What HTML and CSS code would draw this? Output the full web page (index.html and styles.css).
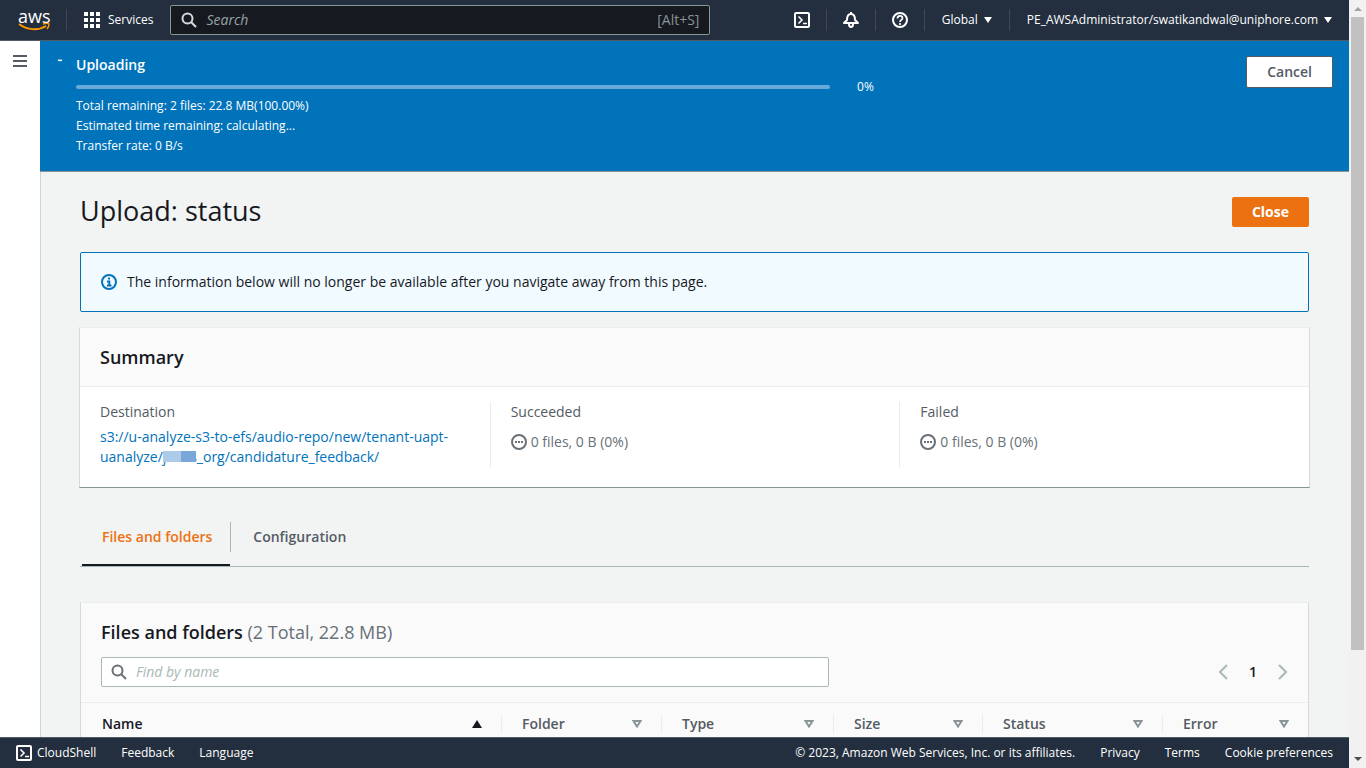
FILE: index.html
```html
<!DOCTYPE html>
<html lang="en">
<head>
  <meta charset="UTF-8">
  <meta name="viewport" content="width=device-width, initial-scale=1.0">
  <title>Upload: status</title>
  <link rel="stylesheet" href="styles.css">
</head>
<body>
  <div class="app">
    <header class="topbar">
      <a href="#" class="logo" aria-label="AWS home">
        <span class="logo-text">aws</span>
        <svg class="logo-smile" width="32" height="8" viewBox="0 0 32 8" fill="none" stroke="#ff9900">
          <path d="M1 1C9 7 20 8 28 3" stroke-width="2"/>
          <path d="M25 1C28 0 30 0 31 1C31 3 30 5 29 6" stroke-width="1.4"/>
        </svg>
      </a>
      <button class="services">
        <svg width="16" height="16" viewBox="0 0 16 16" fill="#fff">
          <path d="M0 0h4v4H0zM6 0h4v4H6zM12 0h4v4h-4zM0 6h4v4H0zM6 6h4v4H6zM12 6h4v4h-4zM0 12h4v4H0zM6 12h4v4H6zM12 12h4v4h-4z"/>
        </svg>
        Services
      </button>
      <div class="top-search">
        <svg width="16" height="16" viewBox="0 0 16 16" fill="none" stroke="#d5dbdb" stroke-width="2">
          <circle cx="6.5" cy="6.5" r="5"/>
          <path d="M10 10l5 5"/>
        </svg>
        <input type="text" placeholder="Search" aria-label="Search">
        <span class="shortcut">[Alt+S]</span>
      </div>
      <nav class="top-nav">
        <button class="icon-button" aria-label="CloudShell">
          <svg width="16" height="16" viewBox="0 0 16 16" fill="none" stroke="#fff" stroke-width="2">
            <rect x="1" y="1" width="14" height="14" rx="1"/>
            <path d="M4.5 4.5L8 8l-3.5 3.5M9 11.5h4" stroke-width="1.6"/>
          </svg>
        </button>
        <button class="icon-button" aria-label="Notifications">
          <svg width="16" height="16" viewBox="0 0 16 16" fill="none" stroke="#fff" stroke-width="2" stroke-linejoin="round">
            <path d="M1 11h14L12 8C12 4 11 2 8 2S4 4 4 8z"/>
            <path d="M8 0v2"/>
            <path d="M6 12c0 4 4 4 4 0"/>
          </svg>
        </button>
        <button class="icon-button" aria-label="Help">
          <svg width="16" height="16" viewBox="0 0 16 16" fill="none" stroke="#fff" stroke-width="2">
            <circle cx="8" cy="8" r="7"/>
            <path d="M5.5 6.5C5.5 3 10.5 3.3 10.5 6.2C10.5 8 8 7.8 8 10M8 11v2" stroke-width="1.7"/>
          </svg>
        </button>
        <button class="menu-button">Global <span class="caret"></span></button>
        <button class="menu-button">PE_AWSAdministrator/swatikandwal@uniphore.com <span class="caret"></span></button>
      </nav>
    </header>

    <div class="body">
      <aside class="sidebar">
        <button class="hamburger" aria-label="Open navigation">
          <svg width="14" height="12" viewBox="0 0 14 12" fill="#545b64">
            <path d="M0 0h14v2H0zM0 5h14v2H0zM0 10h14v2H0z"/>
          </svg>
        </button>
      </aside>

      <main class="content">
        <section class="flash">
          <svg class="spinner" width="16" height="16" viewBox="0 0 16 16" fill="none" stroke="#fff">
            <path d="M2 5l2 .5 2-.3" stroke-width="1.5"/>
          </svg>
          <div class="flash-body">
            <h2>Uploading</h2>
            <div class="progress-row">
              <div class="progress" role="progressbar" aria-label="Upload progress" aria-valuenow="0"></div>
              <span>0%</span>
            </div>
            <p>Total remaining: 2 files: 22.8 MB(100.00%)</p>
            <p>Estimated time remaining: calculating...</p>
            <p>Transfer rate: 0 B/s</p>
          </div>
          <button class="button cancel">Cancel</button>
        </section>

        <div class="page">
          <div class="page-header">
            <h1>Upload: status</h1>
            <button class="button primary">Close</button>
          </div>

          <div class="alert">
            <svg width="16" height="16" viewBox="0 0 16 16" fill="none" stroke="#0073bb" stroke-width="2">
              <circle cx="8" cy="8" r="7"/>
              <path d="M7 4.5h2M6 7.5h2.3V11M6 11.5h4.5"/>
            </svg>
            <p>The information below will no longer be available after you navigate away from this page.</p>
          </div>

          <section class="card summary-card">
            <h2 class="card-title">Summary</h2>
            <div class="summary">
              <div class="summary-item">
                <h3>Destination</h3>
                <a href="#">s3://u-analyze-s3-to-efs/audio-repo/new/tenant-uapt-<br>uanalyze/<span class="masked"><span>j</span><span>s</span></span>_org/candidature_feedback/</a>
              </div>
              <div class="summary-item">
                <h3>Succeeded</h3>
                <p class="status">
                  <svg width="16" height="16" viewBox="0 0 16 16" fill="none" stroke="#687078" stroke-width="2">
                    <circle cx="8" cy="8" r="7"/>
                    <path d="M4 8h2M7 8h2M10 8h2"/>
                  </svg>
                  0 files, 0 B (0%)
                </p>
              </div>
              <div class="summary-item">
                <h3>Failed</h3>
                <p class="status">
                  <svg width="16" height="16" viewBox="0 0 16 16" fill="none" stroke="#687078" stroke-width="2">
                    <circle cx="8" cy="8" r="7"/>
                    <path d="M4 8h2M7 8h2M10 8h2"/>
                  </svg>
                  0 files, 0 B (0%)
                </p>
              </div>
            </div>
          </section>

          <div class="tabs" role="tablist">
            <button class="tab active" role="tab" aria-selected="true"><span>Files and folders</span></button>
            <button class="tab" role="tab" aria-selected="false"><span>Configuration</span></button>
          </div>

          <section class="card files">
            <h2 class="files-title">Files and folders <span>(2 Total, 22.8 MB)</span></h2>
            <div class="files-tools">
              <div class="filter">
                <svg width="16" height="16" viewBox="0 0 16 16" fill="none" stroke="#687078" stroke-width="2">
                  <circle cx="6.5" cy="6.5" r="5"/>
                  <path d="M10 10l5 5"/>
                </svg>
                <input type="text" placeholder="Find by name" aria-label="Find by name">
              </div>
              <div class="pagination">
                <button aria-label="Previous page">
                  <svg width="10" height="16" viewBox="0 0 10 16" fill="none" stroke="#aab7b8" stroke-width="2"><path d="M9 1L2 8l7 7"/></svg>
                </button>
                <button class="current">1</button>
                <button aria-label="Next page">
                  <svg width="10" height="16" viewBox="0 0 10 16" fill="none" stroke="#aab7b8" stroke-width="2"><path d="M1 1l7 7-7 7"/></svg>
                </button>
              </div>
            </div>
            <table>
              <thead>
                <tr>
                  <th class="sorted"><div>Name <svg width="10" height="8" viewBox="0 0 10 8" fill="#16191f"><path d="M5 0l5 8H0z"/></svg></div></th>
                  <th class="col-folder"><div>Folder <svg width="10" height="8" viewBox="0 0 10 8" fill="none" stroke="#879596" stroke-width="2"><path d="M1.5 1h7L5 6.5z"/></svg></div></th>
                  <th class="col-type"><div>Type <svg width="10" height="8" viewBox="0 0 10 8" fill="none" stroke="#879596" stroke-width="2"><path d="M1.5 1h7L5 6.5z"/></svg></div></th>
                  <th class="col-size"><div>Size <svg width="10" height="8" viewBox="0 0 10 8" fill="none" stroke="#879596" stroke-width="2"><path d="M1.5 1h7L5 6.5z"/></svg></div></th>
                  <th class="col-status"><div>Status <svg width="10" height="8" viewBox="0 0 10 8" fill="none" stroke="#879596" stroke-width="2"><path d="M1.5 1h7L5 6.5z"/></svg></div></th>
                  <th class="col-error"><div>Error <svg width="10" height="8" viewBox="0 0 10 8" fill="none" stroke="#879596" stroke-width="2"><path d="M1.5 1h7L5 6.5z"/></svg></div></th>
                </tr>
              </thead>
            </table>
          </section>
        </div>
      </main>
    </div>

    <footer class="footer">
      <div class="footer-left">
        <a href="#" class="cloudshell">
          <svg width="16" height="16" viewBox="0 0 16 16" fill="none" stroke="#fff" stroke-width="2">
            <rect x="1" y="1" width="14" height="14" rx="1"/>
            <path d="M4.5 4.5L8 8l-3.5 3.5M9 11.5h4" stroke-width="1.6"/>
          </svg>
          CloudShell
        </a>
        <a href="#">Feedback</a>
        <a href="#">Language</a>
      </div>
      <div class="footer-right">
        <span class="copyright">© 2023, Amazon Web Services, Inc. or its affiliates.</span>
        <a href="#">Privacy</a>
        <a href="#">Terms</a>
        <a href="#">Cookie preferences</a>
      </div>
    </footer>
  </div>

  <div class="scrollbar">
    <span class="arrow-up"></span>
    <div class="thumb"></div>
    <span class="arrow-down"></span>
  </div>
</body>
</html>
```
FILE: styles.css
```css
* {
  box-sizing: border-box;
}

body {
  display: flex;
  height: 100vh;
  margin: 0;
  overflow: hidden;
  font-family: "Open Sans", "Noto Sans", sans-serif;
  font-size: 14px;
  line-height: 20px;
  color: #16191f;
  background-color: #f2f3f3;
}

h1, h2, h3, p {
  margin: 0;
}

a {
  color: #0073bb;
  text-decoration: none;
}

button, input {
  font: inherit;
}

button {
  padding: 0;
  border: none;
  background: none;
  color: inherit;
  cursor: pointer;
}

svg {
  display: block;
  flex-shrink: 0;
}

h2, th, .tab, .button, .pagination .current {
  font-weight: 600;
}

.app {
  display: flex;
  flex: 1;
  flex-direction: column;
  min-width: 0;
}

/* top bar */
.topbar {
  display: flex;
  align-items: center;
  height: 41px;
  flex-shrink: 0;
  padding-left: 18px;
  background-color: #232f3e;
  border-bottom: 1px solid #545b64;
  color: #fff;
  font-size: 12px;
  font-weight: 500;
}

.logo {
  width: 32px;
  color: #fff;
}

.logo-text {
  display: block;
  font-size: 18px;
  font-weight: 500;
  line-height: 14px;
  text-align: center;
}

.services {
  display: flex;
  align-items: center;
  gap: 8px;
  height: 22px;
  margin-left: 16px;
  padding: 0 17px;
  border-left: 1px solid #414750;
}

.top-search {
  display: flex;
  align-items: center;
  width: 540px;
  height: 30px;
  padding: 0 10px;
  border: 1px solid #879596;
  border-radius: 2px;
  background-color: #16191f;
}

.top-search input {
  flex: 1;
  min-width: 0;
  padding: 0 9px;
  border: none;
  outline: none;
  background: none;
  color: #fff;
  font-size: 14px;
  font-weight: 400;
}

.top-search input::placeholder {
  color: #95a5a6;
  font-style: italic;
}

.shortcut {
  color: #879596;
  font-size: 14px;
  font-weight: 400;
}

.top-nav {
  display: flex;
  margin-left: auto;
}

.top-nav button {
  display: flex;
  align-items: center;
  height: 22px;
  padding: 0 17px;
  border-left: 1px solid #414750;
}

.top-nav .icon-button {
  padding: 0 16px;
}

.top-nav .icon-button:first-child {
  border-left: none;
}

.caret {
  margin-left: 6px;
  border: 4px solid transparent;
  border-top: 6px solid #fff;
  border-bottom: none;
}

/* page frame */
.body {
  display: flex;
  flex: 1;
  min-height: 0;
}

.sidebar {
  display: flex;
  align-items: flex-start;
  width: 40px;
  padding: 14px 13px;
  background-color: #fff;
}

.content {
  flex: 1;
  min-width: 0;
  overflow: hidden;
}

/* upload banner */
.flash {
  display: flex;
  align-items: flex-start;
  padding: 14px 16px 15px;
  background-color: #0073bb;
  border-bottom: 1px solid #879596;
  color: #fff;
}

.spinner {
  margin-right: 4px;
}

.flash-body {
  flex: 1;
  margin-right: 10px;
  font-size: 12px;
  font-weight: 500;
}

.flash-body h2 {
  font-size: 14px;
  line-height: 20px;
}

.progress-row {
  display: flex;
  align-items: center;
  gap: 27px;
  height: 21px;
  padding-top: 2px;
}

.progress {
  width: 65%;
  height: 4px;
  border-radius: 2px;
  background-color: #6aaad8;
}

.button {
  height: 30px;
  padding: 0 20px;
  border-radius: 2px;
}

.cancel {
  height: 32px;
  margin-top: 1px;
  border: 1px solid #545b64;
  background-color: #fff;
  color: #545b64;
}

.primary {
  background-color: #ec7211;
  color: #fff;
  font-weight: 700;
}

.page {
  padding: 25px 40px 0 39px;
  border-left: 1px solid #d0d4d4;
}

.page-header {
  display: flex;
  align-items: center;
  justify-content: space-between;
  height: 30px;
  margin-bottom: 25px;
}

.page-header h1 {
  padding-bottom: 2px;
  font-size: 27px;
  font-weight: 400;
  line-height: 28px;
}

.alert {
  display: flex;
  align-items: center;
  gap: 10px;
  padding: 19px 20px;
  margin-bottom: 15px;
  border: 1px solid #0073bb;
  border-radius: 2px;
  background-color: #f1faff;
}

.card {
  background-color: #fff;
  border: 1px solid #d5dbdb;
  border-top-color: #eaeded;
  border-bottom-color: #879596;
}

/* summary */
.summary-card {
  margin: 0 -1px;
}

.card-title {
  padding: 18px 20px;
  background-color: #fafafa;
  border-bottom: 1px solid #eaeded;
  font-size: 18px;
  line-height: 22px;
}

.summary {
  display: grid;
  grid-template-columns: 1fr 1fr 1fr;
  padding: 15px 0 20px;
}

.summary-item {
  padding: 0 20px;
}

.summary-item + .summary-item {
  border-left: 1px solid #eaeded;
}

.summary-item h3 {
  margin-bottom: 5px;
  color: #545b64;
  font-size: 14px;
  font-weight: 400;
}

.status {
  display: flex;
  align-items: center;
  gap: 4px;
  padding-top: 5px;
  color: #687078;
}

/* part of the path is covered */
.masked {
  position: relative;
  display: inline-flex;
  justify-content: space-between;
  width: 34px;
}

.masked::after {
  content: "";
  position: absolute;
  top: 4px;
  left: 0;
  width: 33px;
  height: 11px;
  background: linear-gradient(90deg, #adcae9 18px, #7aa7d9 18px);
}

/* tabs */
.tabs {
  display: flex;
  margin-top: 19px;
  margin-bottom: 35px;
  padding-left: 2px;
  border-bottom: 1px solid #aab7b8;
}

.tab {
  padding: 15px 0 12px;
  border-bottom: 2px solid transparent;
  color: #545b64;
}

.tab span {
  display: block;
  padding: 5px 18px 5px 20px;
}

.tab + .tab span {
  padding-left: 22px;
  border-left: 1px solid #aab7b8;
}

.tab.active {
  border-bottom-color: #16191f;
  color: #ec7211;
}

/* files table */
.files {
  background-color: #fafafa;
}

.files-title {
  padding: 18px 20px 14px;
  font-size: 18px;
  line-height: 22px;
}

.files-title span {
  color: #687078;
  font-weight: 400;
}

.files-tools {
  display: flex;
  align-items: center;
  justify-content: space-between;
  padding: 0 20px 15px;
  border-bottom: 1px solid #eaeded;
}

.filter {
  display: flex;
  align-items: center;
  gap: 9px;
  width: 728px;
  height: 30px;
  padding: 0 9px;
  border: 1px solid #aab7b8;
  border-radius: 2px;
  background-color: #fff;
}

.filter input {
  flex: 1;
  min-width: 0;
  padding: 0;
  border: none;
  outline: none;
}

.filter input::placeholder {
  color: #aab7b8;
  font-style: italic;
}

.pagination {
  display: flex;
  align-items: center;
  gap: 21px;
}

table {
  width: 100%;
  table-layout: fixed;
  border-collapse: collapse;
}

th {
  padding: 11px 0;
  color: #545b64;
  text-align: left;
}

th div {
  display: flex;
  align-items: center;
  justify-content: space-between;
  padding: 0 19px 0 20px;
  border-left: 1px solid #eaeded;
}

th.sorted div {
  color: #16191f;
  border-left-color: transparent;
}

.col-folder {
  width: 160px;
}

.col-type {
  width: 172px;
}

.col-size {
  width: 149px;
}

.col-status {
  width: 180px;
}

.col-error {
  width: 146px;
}

/* footer */
.footer {
  display: flex;
  align-items: center;
  justify-content: space-between;
  height: 31px;
  flex-shrink: 0;
  padding: 0 16px;
  background-color: #232f3e;
  border-top: 1px solid #545b64;
  color: #fff;
  font-size: 12px;
  font-weight: 500;
}

.footer a {
  color: #fff;
}

.footer-left,
.footer-right {
  display: flex;
  align-items: center;
  gap: 25px;
}

.cloudshell {
  display: flex;
  align-items: center;
  gap: 5px;
}

/* window scrollbar */
.scrollbar {
  display: flex;
  flex-direction: column;
  align-items: center;
  width: 17px;
  padding: 7px 0;
  background-color: #f1f1f1;
}

.arrow-up {
  border: 4px solid transparent;
  border-top: none;
  border-bottom: 4px solid #a3a3a3;
}

.thumb {
  width: 13px;
  height: 84%;
  margin-top: 6px;
  background-color: #c1c1c1;
}

.arrow-down {
  margin-top: auto;
  border: 4px solid transparent;
  border-bottom: none;
  border-top: 4px solid #505050;
}
```
